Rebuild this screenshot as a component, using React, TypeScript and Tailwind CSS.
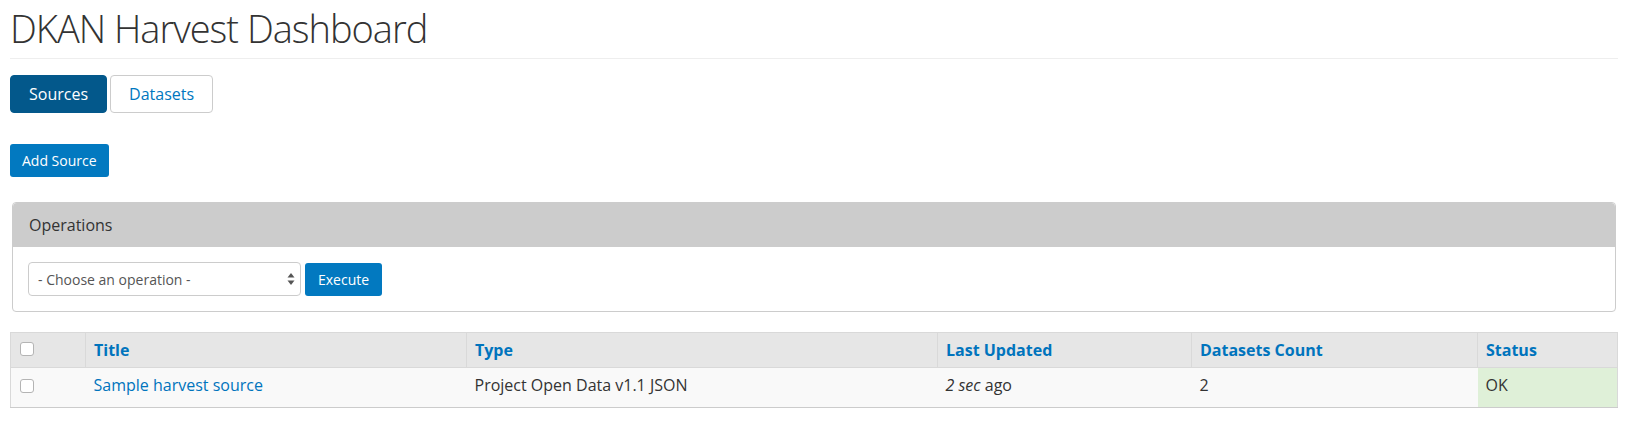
import React, { useState } from 'react';

type Source = {
  id: number;
  title: string;
  type: string;
  updated: string;
  count: number;
  status: string;
};

const sources: Source[] = [
  { id: 1, title: 'Sample harvest source', type: 'Project Open Data v1.1 JSON', updated: '2 sec', count: 2, status: 'OK' },
];

const Checkbox: React.FC<{ checked?: boolean; onChange?: () => void }> = ({ checked, onChange }) => (
  <input
    type="checkbox"
    checked={!!checked}
    onChange={onChange}
    className="appearance-none block w-[14px] h-[14px] border border-[#b4b4b4] rounded-[3px] bg-white m-0"
  />
);

export default function App() {
  const [tab, setTab] = useState<'sources' | 'datasets'>('sources');
  const [operation, setOperation] = useState<string>('');
  const [selected, setSelected] = useState<Record<number, boolean>>({});

  const thClass = 'h-[34px] px-2 pt-[6px] pb-[6px] align-top text-left font-bold text-[16px] leading-[22px] text-[#0074bd] border-l border-[#d9d9d9]';
  const tdClass = 'px-2 pt-[6px] pb-[11px] align-top text-[16px] leading-[22px] text-[#333]';

  return (
    <div className="min-h-screen bg-white px-[10px] font-['Open_Sans',sans-serif] text-[#333]">
      <h1 className="pt-[6px] pb-[8px] text-[38px] leading-[44px] tracking-[-1px] font-light text-[#333] border-b border-[#eeeeee]">
        DKAN Harvest Dashboard
      </h1>

      <div className="mt-[16px] flex gap-[3px]">
        <button
          onClick={() => setTab('sources')}
          className={`h-[38px] px-[18px] rounded-[4px] text-[16px] border ${tab === 'sources' ? 'bg-[#03588b] border-[#03588b] text-white' : 'bg-white border-[#cccccc] text-[#0077c0]'}`}
        >
          Sources
        </button>
        <button
          onClick={() => setTab('datasets')}
          className={`h-[38px] px-[18px] rounded-[4px] text-[16px] border ${tab === 'datasets' ? 'bg-[#03588b] border-[#03588b] text-white' : 'bg-white border-[#cccccc] text-[#0077c0]'}`}
        >
          Datasets
        </button>
      </div>

      <div className="mt-[31px]">
        <button className="h-[33px] px-[12px] rounded-[3px] bg-[#0279c0] text-white text-[14px]">Add Source</button>
      </div>

      <fieldset className="mt-[25px] mx-[2px] border border-[#cccccc] rounded-[4px] overflow-hidden">
        <div className="h-[44px] bg-[#cccccc] px-[16px] flex items-center text-[16px] text-[#333]">Operations</div>
        <div className="px-[15px] pt-[15px] pb-[15px] flex items-center gap-[4px]">
          <div className="relative w-[273px]">
            <select
              value={operation}
              onChange={(e) => setOperation(e.target.value)}
              className="appearance-none w-full h-[34px] pl-[9px] pr-6 border border-[#cccccc] rounded-[4px] bg-white text-[14px] text-[#555]"
            >
              <option value="">- Choose an operation -</option>
              <option value="harvest">Harvest (cache and migrate)</option>
              <option value="cache">Cache source(s)</option>
              <option value="migrate">Migrate source(s)</option>
            </select>
            <svg className="absolute right-[6px] top-[11px] pointer-events-none" width="8" height="12" viewBox="0 0 8 12">
              <path d="M4 0 L7.5 4.5 H0.5 Z" fill="#555" />
              <path d="M4 12 L7.5 7.5 H0.5 Z" fill="#555" />
            </svg>
          </div>
          <button className="h-[33px] px-[13px] rounded-[3px] bg-[#0279c0] text-white text-[14px]">Execute</button>
        </div>
      </fieldset>

      <table className="mt-[20px] w-full table-fixed border-collapse border border-[#d9d9d9]">
        <thead>
          <tr className="bg-[#e6e6e6] border-b border-[#d9d9d9]">
            <th className="w-[75px] h-[34px] pl-[9px] pt-[9px] align-top text-left">
              <Checkbox />
            </th>
            <th className={`${thClass} w-[381px]`}>Title</th>
            <th className={`${thClass} w-[471px]`}>Type</th>
            <th className={`${thClass} w-[254px]`}>Last Updated</th>
            <th className={`${thClass} w-[286px]`}>Datasets Count</th>
            <th className={thClass}>Status</th>
          </tr>
        </thead>
        <tbody>
          {sources.map((s) => (
            <tr key={s.id} className="bg-[#f9f9f9] border-b border-[#cccccc]">
              <td className="pl-[9px] pt-[11px] align-top">
                <Checkbox checked={selected[s.id]} onChange={() => setSelected({ ...selected, [s.id]: !selected[s.id] })} />
              </td>
              <td className={tdClass}>
                <a href="#" className="text-[#0074bd]">{s.title}</a>
              </td>
              <td className={tdClass}>{s.type}</td>
              <td className={tdClass}>
                <em>{s.updated}</em> ago
              </td>
              <td className={tdClass}>{s.count}</td>
              <td className={`${tdClass} bg-[#dff0d8] text-[#3c763d]`}>{s.status}</td>
            </tr>
          ))}
        </tbody>
      </table>
    </div>
  );
}
